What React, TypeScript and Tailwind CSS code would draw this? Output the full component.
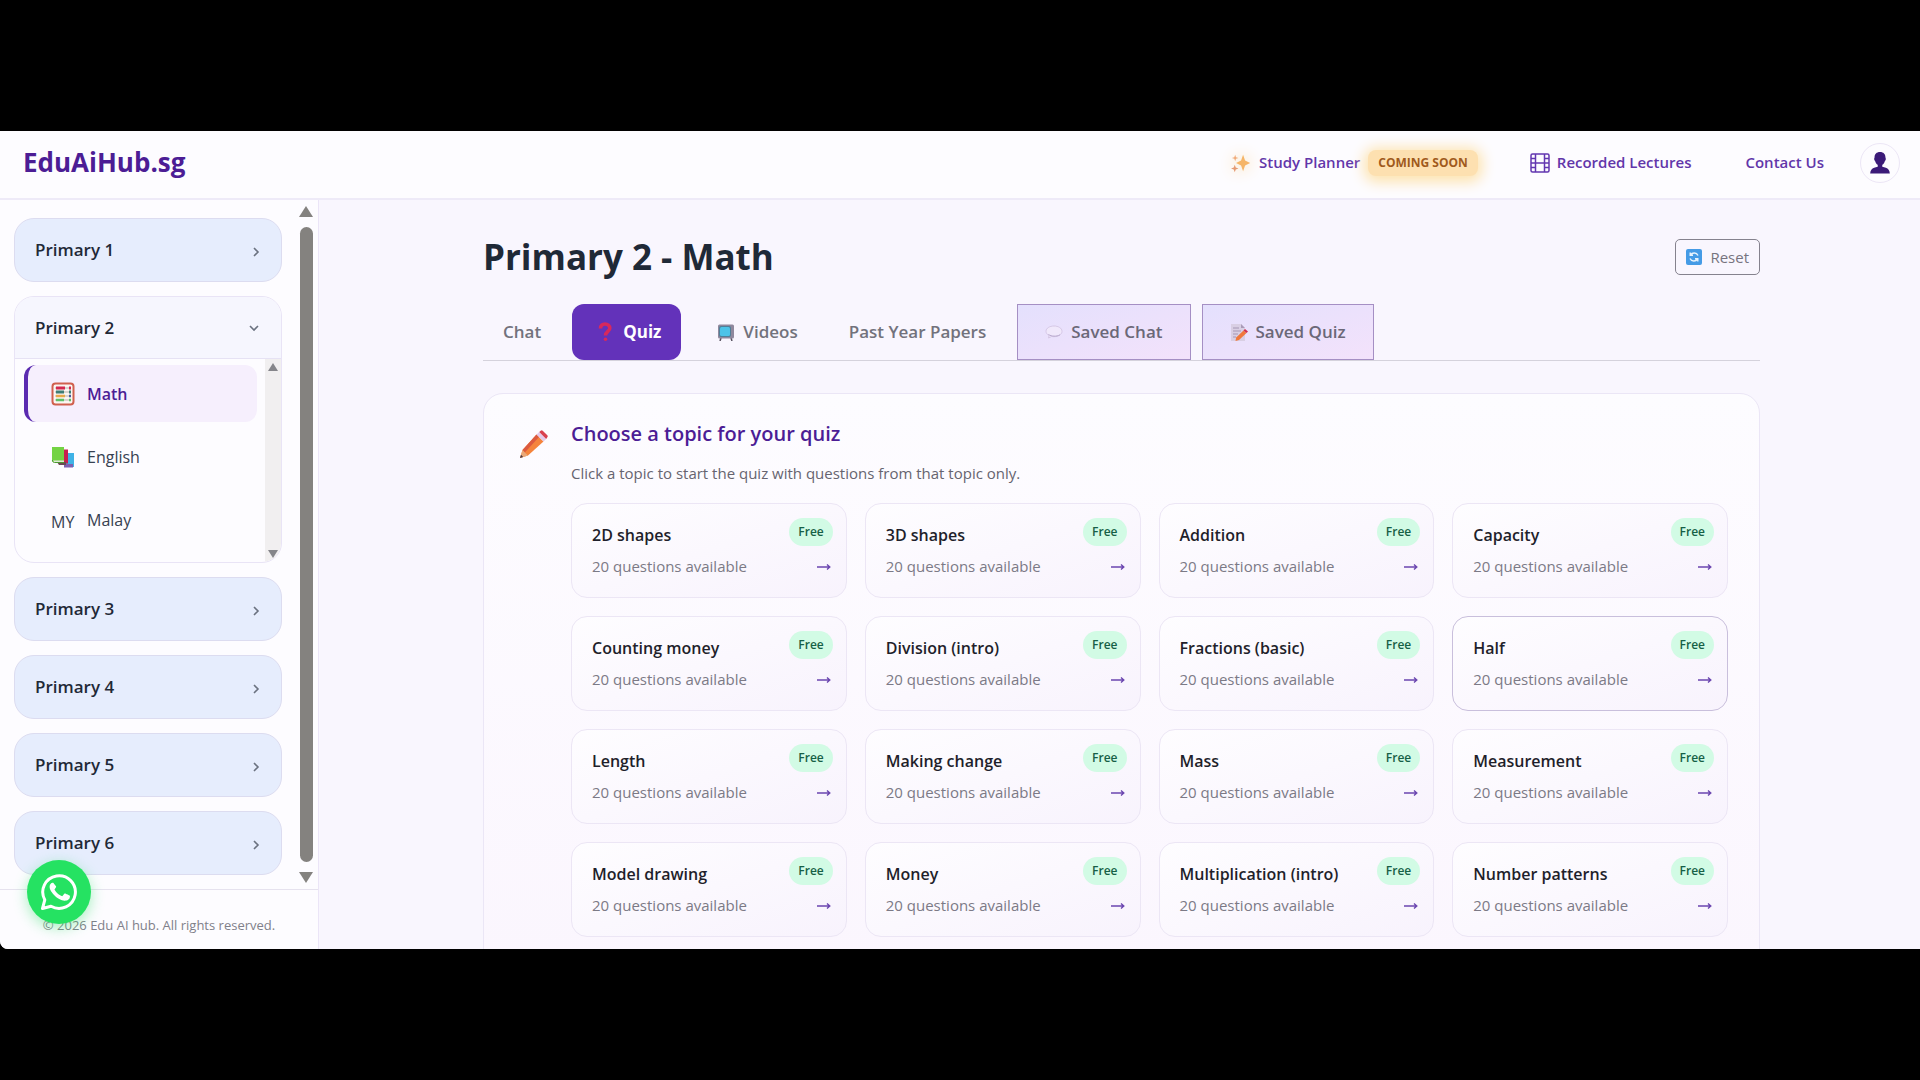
import React, { useState } from "react";

const TOPICS = [
  "2D shapes",
  "3D shapes",
  "Addition",
  "Capacity",
  "Counting money",
  "Division (intro)",
  "Fractions (basic)",
  "Half",
  "Length",
  "Making change",
  "Mass",
  "Measurement",
  "Model drawing",
  "Money",
  "Multiplication (intro)",
  "Number patterns",
];

function AbacusIcon() {
  return (
    <svg viewBox="0 0 24 24" className="size-6" aria-hidden="true">
      <rect x="1.5" y="1.5" width="21" height="21" rx="3" fill="#fbf6f2" stroke="#d0604e" strokeWidth="2" />
      <path d="M4 6h16M4 10h16M4 14h16M4 18h16" stroke="#b9b3ae" strokeWidth="1" />
      <path d="M5 6h9M18 6h2" stroke="#d3294f" strokeWidth="3" />
      <path d="M5 10h8M18 10h2" stroke="#3e7d74" strokeWidth="3" />
      <path d="M5 14h9" stroke="#e8a94b" strokeWidth="2.6" />
      <path d="M5 18h8M18 18h2" stroke="#5fc067" strokeWidth="2.6" />
      <path d="M18 14h2" stroke="#4a5a9a" strokeWidth="2.6" />
    </svg>
  );
}

function BooksIcon() {
  return (
    <svg viewBox="0 0 24 24" className="size-6" aria-hidden="true">
      <path d="M15 8h8v14h-8z" fill="#3fb2e6" />
      <path d="M13 19h9v3.500h-9z" fill="#7b5fb0" />
      <path d="M9 4.500h8v14H9z" fill="#c8204f" />
      <path d="M6 17h9v3H8z" fill="#6b4a52" />
      <path d="M1 2h12v15H3a2 2 0 0 1-2-2z" fill="#74d344" />
      <path d="M2 15.500h11V17.500H3.500z" fill="#dfe9d8" />
      <path d="M1.500 15a2 2 0 0 0 2 2.500H13" fill="none" stroke="#4c9a2f" strokeWidth="1" />
    </svg>
  );
}

function SparklesIcon() {
  return (
    <svg viewBox="0 0 24 24" className="size-5 drop-shadow-[0_0_8px_#fbd58a]" aria-hidden="true">
      <path d="M14.500 2l2.400 7.100L23 12l-6.100 2.900L14.500 22l-2.400-7.100L6 12l6.100-2.900z" fill="#f5b568" />
      <path d="M5 2l1 3 3 1-3 1-1 3-1-3-3-1 3-1z" fill="#f0aa78" />
      <path d="M4.500 14l1.200 3.300L9 18.500l-3.300 1.200L4.500 23l-1.200-3.300L0 18.500l3.300-1.200z" fill="#e59a72" />
    </svg>
  );
}

function FilmIcon() {
  return (
    <svg viewBox="0 0 20 20" className="size-5" fill="none" stroke="#6236b0" strokeWidth="1.500" aria-hidden="true">
      <rect x="1" y="1" width="18" height="18" rx="1.500" />
      <path d="M5.500 1v18M14.500 1v18M5.500 10h9M1 5.500h4.500M1 10h4.500M1 14.500h4.500M14.500 5.500H19M14.500 10H19M14.500 14.500H19" />
    </svg>
  );
}

function UserIcon() {
  return (
    <svg viewBox="0 0 22 24" className="h-[22px] w-5" fill="#3b1a78" aria-hidden="true">
      <path d="M11 0c3.800 0 6 2.300 6 5.800 0 1 .6 1.200.3 2.500-.2.900-.8 1-1 1.900-.5 2.500-2.500 4.600-5.300 4.600s-4.800-2.100-5.300-4.600c-.2-.9-.8-1-1-1.900C4.400 7 5 6.800 5 5.800 5 2.300 7.200 0 11 0z" />
      <path d="M8.500 13h5v3l4 1.200c2.500.8 4 2.800 4.300 6.300H.2c.3-3.500 1.800-5.500 4.300-6.300l4-1.200z" />
    </svg>
  );
}

function QuestionIcon() {
  return (
    <svg viewBox="0 0 16 20" className="h-5 w-4" fill="none" aria-hidden="true">
      <path d="M3.500 6.500C3.500 3.500 5.500 2 8 2s4.800 1.700 4.800 4.300c0 3-4.300 3.200-4.300 7.200" stroke="#d8285c" strokeWidth="3.600" />
      <circle cx="8.500" cy="17.300" r="1.800" fill="#d8285c" />
    </svg>
  );
}

function TvIcon() {
  return (
    <svg viewBox="0 0 18 18" className="size-[18px]" aria-hidden="true">
      <path d="M4 15l-1 3M14 15l1 3" stroke="#55505e" strokeWidth="1.500" />
      <rect x="1" y="1.500" width="16" height="14" rx="1.500" fill="#8f889d" />
      <rect x="2" y="3" width="12" height="11" rx="2" fill="#4f7f98" />
      <rect x="3" y="4" width="10" height="9" rx="1.500" fill="#4cc3e8" />
    </svg>
  );
}

function BubbleIcon() {
  return (
    <svg viewBox="0 0 18 18" className="size-[18px]" aria-hidden="true">
      <path d="M9 3c4.400 0 8 2.200 8 5.300s-3.600 5.400-8 5.400c-.8 0-1.600-.1-2.400-.2L3.500 15l.6-2.500C2.200 11.500 1 10 1 8.300 1 5.200 4.600 3 9 3z" fill="#f0e8fb" stroke="#cfc0e0" strokeWidth=".8" />
      <path d="M3.500 11.500c3 2 8 2.300 11.500.3" fill="none" stroke="#b9a9cf" strokeWidth="1" />
    </svg>
  );
}

function MemoIcon() {
  return (
    <svg viewBox="0 0 18 20" className="h-5 w-[18px]" aria-hidden="true">
      <path d="M1 2h10l4 4v13H1z" fill="#d9cfe4" />
      <path d="M11 2v4h4z" fill="#a99bb8" />
      <path d="M3 6h6M3 9h8M3 12h5M3 15h3" stroke="#a597b5" strokeWidth="1" />
      <path d="M13.500 8.500l3 2.500-7.500 7-3.500 1 .7-3.500z" fill="#f0783c" />
      <path d="M13.500 8.500L15 7l3 2.500-1.500 1.500z" fill="#d12f50" />
    </svg>
  );
}

function PencilIcon() {
  return (
    <svg viewBox="0 0 28 28" className="size-7" aria-hidden="true">
      <path d="M16.500 4.500l7 7L8 25.500 0 28l2.500-8z" fill="#f5843c" />
      <path d="M2.500 20L16.500 4.500l2.500 2.500L4.800 22.500z" fill="#dc5a3f" />
      <path d="M2.500 20l2.300 2.500L8 25.500 0 28z" fill="#e9a878" />
      <path d="M0 28l1-3.200 2.200 2.200z" fill="#4a3a44" />
      <path d="M16.500 4.500l2.700-2.500 7 7-2.700 2.500z" fill="#e3c9ea" />
      <path d="M19.200 2l1.500-1.300q1-.9 2 0l4.600 4.600q.9 1 0 2L26.200 9z" fill="#d9404f" />
    </svg>
  );
}

function ResetIcon() {
  return (
    <svg viewBox="0 0 16 16" className="size-4" aria-hidden="true">
      <rect width="16" height="16" rx="2" fill="#459be6" />
      <path d="M12 6.500A4.300 4.300 0 0 0 4.500 6M4 9.500a4.300 4.300 0 0 0 7.500.5M4.200 3.500V6.300H7M11.800 12.500V9.700H9" fill="none" stroke="#e8f3fd" strokeWidth="1.400" />
    </svg>
  );
}

function WhatsAppIcon() {
  return (
    <svg viewBox="0 0 36 36" className="size-9" fill="none" aria-hidden="true">
      <path d="M1.500 34.500l2.300-8.600A16.300 16.300 0 1 1 10 32.200z" stroke="#fff" strokeWidth="3" strokeLinejoin="round" />
      <path
        d="M12.800 9.600c-.4-.8-.8-.8-1.200-.8-1.500 0-3 1.700-3 4.100 0 2.400 1.800 4.700 2 5 .3.300 3.500 5.500 8.600 7.500 4.300 1.700 5.100 1.300 6 1.200.9-.1 3-1.200 3.400-2.400.4-1.200.4-2.200.3-2.400-.2-.4-.6-.4-4.500-2.300-.4-.2-.8-.1-1.100.3l-1.600 2c-.3.400-.6.400-1.100.2-1.500-.6-5.500-2.800-7-6.200-.2-.4 0-.7.200-.9l1.200-1.600c.2-.4.100-.7 0-1z"
        fill="#fff"
      />
    </svg>
  );
}

function Chevron({ open = false }: { open?: boolean }) {
  return (
    <svg viewBox="0 0 10 10" className={`size-[10px] ${open ? "mr-1 rotate-90" : "mt-1"}`} fill="none" stroke="#6b7280" strokeWidth="1.600" aria-hidden="true">
      <path d="M3 1l4 4-4 4" />
    </svg>
  );
}

function LevelButton({ label }: { label: string }) {
  return (
    <button className="flex h-16 w-full shrink-0 items-center justify-between rounded-[20px] border border-[#dcdcf0] bg-[#e6edfd] px-5 text-[17px] font-semibold text-[#1f2937]">
      {label}
      <Chevron />
    </button>
  );
}

function Sidebar() {
  return (
    <aside className="flex w-[319px] shrink-0 flex-col border-r border-[#ebe5f7] bg-[#fdfcff]">
      <div className="flex min-h-0 flex-1">
        <nav className="flex min-w-0 flex-1 flex-col gap-[14px] overflow-hidden pt-[18px] pr-4 pl-[14px]">
          <LevelButton label="Primary 1" />
          <div className="shrink-0 overflow-hidden rounded-[20px] border border-[#e9e4f6]">
            <button className="flex h-[62px] w-full items-center justify-between border-b border-[#e6e2f4] bg-[#f6f6fe] pr-[18px] pl-5 text-[17px] font-semibold text-[#1f2937]">
              Primary 2
              <Chevron open />
            </button>
            <div className="flex h-[203px]">
              <ul className="flex flex-1 flex-col gap-[6px] py-[6px] pr-2 pl-[9px] text-[16px] text-[#374151]">
                <li>
                  <a href="#" className="flex h-[57px] items-center gap-3 rounded-xl border-l-4 border-[#5b2bb0] bg-[#f6effd] pl-[23px] font-semibold text-[#4c1d95]">
                    <AbacusIcon />
                    Math
                  </a>
                </li>
                <li>
                  <a href="#" className="flex h-[57px] items-center gap-3 pl-[27px]">
                    <BooksIcon />
                    English
                  </a>
                </li>
                <li>
                  <a href="#" className="flex h-[57px] items-center gap-3 pl-[27px]">
                    <span className="w-6 pt-1">MY</span>
                    Malay
                  </a>
                </li>
              </ul>
              <div className="flex w-4 flex-col items-center justify-between bg-[#f1eff0] py-1 text-[#85858a]">
                <svg viewBox="0 0 10 8" className="h-2 w-[10px]" fill="currentColor"><path d="M5 0l5 8H0z" /></svg>
                <svg viewBox="0 0 10 8" className="h-2 w-[10px]" fill="currentColor"><path d="M5 8l5-8H0z" /></svg>
              </div>
            </div>
          </div>
          <LevelButton label="Primary 3" />
          <LevelButton label="Primary 4" />
          <LevelButton label="Primary 5" />
          <LevelButton label="Primary 6" />
        </nav>
        <div className="mr-1 flex w-4 flex-col items-center gap-[10px] py-[6px] text-[#84827f]">
          <svg viewBox="0 0 14 11" className="h-[11px] w-[14px]" fill="currentColor"><path d="M7 0l7 11H0z" /></svg>
          <div className="w-[13px] flex-1 rounded-full bg-[#84827f]" />
          <svg viewBox="0 0 14 11" className="h-[11px] w-[14px]" fill="currentColor"><path d="M7 11l7-11H0z" /></svg>
        </div>
      </div>
      <footer className="flex h-[60px] items-center justify-center border-t border-[#e6e2ee] pt-3 text-[13px] text-[#80808a]">
        © 2026 Edu AI hub. All rights reserved.
      </footer>
    </aside>
  );
}

function TopBar() {
  return (
    <header className="flex h-[69px] shrink-0 items-center justify-between border-b-2 border-[#eeeaf8] bg-[#fdfcff] pr-5 pb-1 pl-[23px]">
      <a href="#" className="text-[26px] font-bold text-[#4c1d95]">EduAiHub.sg</a>
      <nav className="flex items-center text-[15px] font-semibold text-[#6236aa]">
        <a href="#" className="flex items-center gap-2">
          <SparklesIcon />
          Study Planner
          <span className="rounded-lg bg-[#fde0b0] px-[10px] py-1 text-[12px] font-bold text-[#a05a1c] shadow-[0_2px_14px_4px_#fde3ae]">COMING SOON</span>
        </a>
        <a href="#" className="ml-[52px] flex items-center gap-[7px]">
          <FilmIcon />
          Recorded Lectures
        </a>
        <a href="#" className="ml-[54px]">Contact Us</a>
        <button aria-label="Account" className="ml-9 flex size-10 items-center justify-center rounded-full border border-[#ece6f6]">
          <UserIcon />
        </button>
      </nav>
    </header>
  );
}

function TopicCard({ title, active }: { title: string; active: boolean }) {
  return (
    <button
      className={`flex h-[95px] justify-between rounded-2xl border bg-linear-to-br from-[#fefdff] to-[#f8f3fd] pt-[14px] pr-[13px] pl-5 text-left ${
        active ? "border-[#c9bfdc]" : "border-[#ece6f5]"
      }`}
    >
      <span className="flex flex-col gap-1">
        <span className="text-[16px] leading-[34px] font-semibold whitespace-nowrap text-[#1f1f2b]">{title}</span>
        <span className="text-[15px] leading-5 whitespace-nowrap text-[#7c7a86]">20 questions available</span>
      </span>
      <span className="flex flex-col items-end gap-3">
        <span className="rounded-full bg-[#d2fbe5] px-[9px] text-[12px] leading-[28px] font-semibold text-[#166046]">Free</span>
        <svg viewBox="0 0 14 10" className="mt-1 mr-[2px] h-[10px] w-[14px]" fill="none" stroke="#6b46b0" strokeWidth="1.400" aria-hidden="true">
          <path d="M0 5h12.500M10 2.500L12.800 5 10 7.500" />
        </svg>
      </span>
    </button>
  );
}

const TABS = [
  { id: "chat", label: "Chat", icon: null },
  { id: "quiz", label: "Quiz", icon: <QuestionIcon /> },
  { id: "videos", label: "Videos", icon: <TvIcon /> },
  { id: "papers", label: "Past Year Papers", icon: null },
  { id: "saved-chat", label: "Saved Chat", icon: <BubbleIcon /> },
  { id: "saved-quiz", label: "Saved Quiz", icon: <MemoIcon /> },
];

export default function App() {
  const [tab, setTab] = useState("quiz");

  const tabStyle = (t: (typeof TABS)[number]) => {
    if (t.id === tab) return "gap-[10px] rounded-xl bg-[#6332ba] pr-5 pl-[25px] font-bold text-white";
    if (t.id.startsWith("saved")) {
      return "gap-2 border border-[#a58fc4] bg-linear-to-br from-[#e4e0fd] to-[#f3e2fb] px-[27px] font-semibold text-[#6b6878]";
    }
    return t.icon ? "gap-2 pr-5 pl-[25px] font-semibold text-[#72727c]" : "px-5 font-semibold text-[#72727c]";
  };

  return (
    <div className="h-screen bg-black py-[131px] font-['Open_Sans','Noto_Sans',sans-serif]">
      <div className="relative flex h-full flex-col overflow-hidden rounded-bl-lg bg-[#f9f6fe]">
        <TopBar />
        <div className="flex min-h-0 flex-1">
          <Sidebar />
          <main className="min-w-0 flex-1 overflow-hidden px-[160px] pt-8 pl-[164px]">
            <div className="flex h-[50px] items-center justify-between">
              <h1 className="text-[35px] font-bold text-[#1f2937]">Primary 2 - Math</h1>
              <button className="flex h-9 items-center gap-2 rounded-[5px] border border-[#85828e] px-[10px] text-[15px] text-[#77747f]">
                <ResetIcon />
                Reset
              </button>
            </div>
            <div className="mt-[22px] flex gap-[11px] border-b border-[#d5d2dc] text-[17px]">
              {TABS.map((t) => (
                <button key={t.id} onClick={() => setTab(t.id)} className={`flex h-14 items-center whitespace-nowrap ${tabStyle(t)}`}>
                  {t.icon}
                  {t.label}
                </button>
              ))}
            </div>
            <section className="mt-8 flex gap-[23px] rounded-[20px] border border-[#ebe6f6] bg-linear-to-b from-[#fdfcff] to-[#fbf6fe] pt-6 pr-[31px] pb-8 pl-9">
              <div className="pt-3">
                <PencilIcon />
              </div>
              <div className="min-w-0 flex-1">
                <h2 className="text-[20px] leading-[32px] font-semibold text-[#4c1d95]">Choose a topic for your quiz</h2>
                <p className="mt-[11px] text-[15px] leading-6 text-[#66646f]">Click a topic to start the quiz with questions from that topic only.</p>
                <div className="mt-[18px] grid grid-cols-4 gap-[18px]">
                  {TOPICS.map((t) => (
                    <TopicCard key={t} title={t} active={t === "Half"} />
                  ))}
                </div>
              </div>
            </section>
          </main>
        </div>
        <a
          href="#"
          aria-label="WhatsApp"
          className="absolute bottom-[25px] left-[27px] flex size-16 items-center justify-center rounded-full bg-[#25e262] shadow-[0_4px_14px_#25e05f66]"
        >
          <WhatsAppIcon />
        </a>
      </div>
    </div>
  );
}
